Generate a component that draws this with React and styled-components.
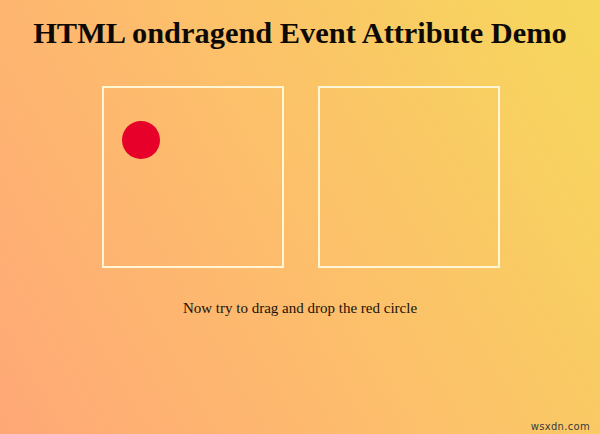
import React from "react";
import styled, { createGlobalStyle } from "styled-components";

const GlobalStyle = createGlobalStyle`
  html, body {
    margin: 0;
    padding: 0;
  }
  body {
    font-family: "Liberation Serif", "Times New Roman", serif;
    color: #111;
  }
`;

const Page = styled.div`
  position: relative;
  width: 600px;
  height: 434px;
  overflow: hidden;
  background: linear-gradient(60deg, #ffa877 0%, #fdbd6c 45%, #f6d85c 100%);
  display: flex;
  flex-direction: column;
  align-items: center;
`;

const Title = styled.h1`
  margin: 15px 0 0;
  font-size: 30.4px;
  line-height: 36px;
  font-weight: bold;
  color: #0d0a06;
`;

const Boards = styled.div`
  display: flex;
  gap: 34px;
  margin-top: 35px;
  margin-left: 2px;
`;

const DropZone = styled.div`
  width: 178px;
  height: 178px;
  border: 2px solid #fff6d8;
  box-sizing: content-box;
`;

const Circle = styled.div`
  width: 38px;
  height: 38px;
  border-radius: 50%;
  background: #e6002a;
  margin: 33px 0 0 18px;
`;

const Hint = styled.p`
  margin: 31px 0 0;
  font-size: 15px;
  line-height: 18px;
  color: #1a1208;
`;

const Watermark = styled.span`
  position: absolute;
  right: 10px;
  bottom: 2px;
  font-family: "DejaVu Sans", sans-serif;
  font-size: 10px;
  letter-spacing: 0.3px;
  color: #3a3a3a;
`;

export default function App() {
  return (
    <>
      <GlobalStyle />
      <Page>
        <Title>HTML ondragend Event Attribute Demo</Title>
        <Boards>
          <DropZone>
            <Circle draggable="true" />
          </DropZone>
          <DropZone />
        </Boards>
        <Hint>Now try to drag and drop the red circle</Hint>
        <Watermark>wsxdn.com</Watermark>
      </Page>
    </>
  );
}
